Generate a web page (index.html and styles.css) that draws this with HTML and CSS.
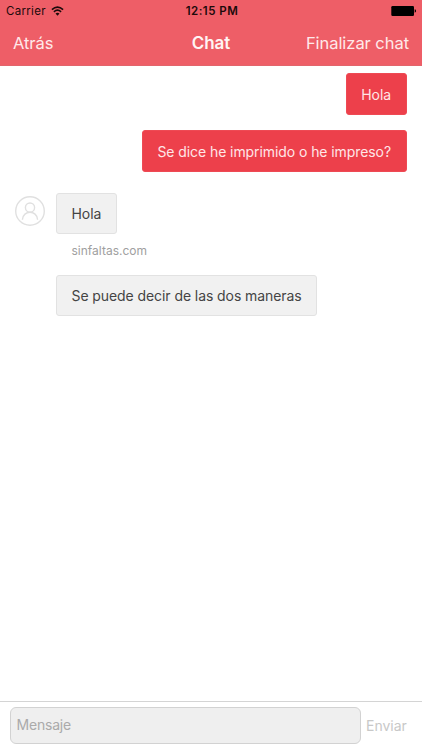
FILE: index.html
```html
<!DOCTYPE html>
<html lang="es">

<head>
    <meta charset="UTF-8" />
    <meta name="viewport" content="width=device-width, initial-scale=1.0" />
    <title>Chat</title>
    <link rel="stylesheet" href="styles.css">
</head>

<body>
    <header>
        <div class="status-bar">
            <div class="carrier">
                <span>Carrier</span>
                <svg class="wifi" viewBox="0 0 13 10">
                    <path d="M0.9 3.6 Q6.5 -1.5 12.1 3.6" />
                    <path d="M2.9 5.8 Q6.5 2.5 10.1 5.8" />
                    <path class="dot" d="M4.5 7.6 Q6.5 5.9 8.5 7.6 L6.5 9.7 Z" />
                </svg>
            </div>
            <span class="clock">12:15 PM</span>
            <svg class="battery" viewBox="0 0 26 10">
                <rect x="0.3" y="0" width="22.7" height="10" rx="1.2" />
                <path d="M23.7 3.3 Q25.1 3.6 25.1 5 Q25.1 6.4 23.7 6.7 Z" />
            </svg>
        </div>
        <nav class="nav-bar">
            <a class="back">Atrás</a>
            <span class="title">Chat</span>
            <a class="finish">Finalizar chat</a>
        </nav>
    </header>

    <main class="messages">
        <div class="bubble sent">Hola</div>
        <div class="bubble sent">Se dice he imprimido o he impreso?</div>

        <div class="received-row">
            <svg class="avatar" viewBox="0 0 30 30">
                <circle cx="15" cy="15" r="14.3" />
                <circle cx="15" cy="11.6" r="4.6" />
                <path d="M7.4 23.7 C8 13.8 22 13.8 22.6 23.7" />
            </svg>
            <div class="received-group">
                <div class="bubble received">Hola</div>
                <div class="sender">sinfaltas.com</div>
                <div class="bubble received">Se puede decir de las dos maneras</div>
            </div>
        </div>
    </main>

    <footer class="composer">
        <input type="text" class="message-input" placeholder="Mensaje">
        <button class="send">Enviar</button>
    </footer>
</body>

</html>
```
FILE: styles.css
```css
* {
    box-sizing: border-box;
}

body {
    margin: 0;
    height: 100vh;
    display: flex;
    flex-direction: column;
    background-color: #fff;
    font-family: Inter, "Liberation Sans", sans-serif;
    overflow: hidden;
}

header {
    height: 66px;
    flex: none;
    background-color: #ee5e67;
    border-bottom: 1px solid #e2656c;
}

/* Status bar */
.status-bar {
    display: grid;
    grid-template-columns: 1fr auto 1fr;
    align-items: center;
    height: 22px;
    padding: 0 5px 0 6px;
    font-size: 11.5px;
    color: #1c0a0b;
}

.carrier {
    display: flex;
    align-items: center;
    gap: 5px;
    letter-spacing: 0.3px;
}

.wifi {
    width: 13px;
    height: 10px;
    fill: none;
    stroke: #1c0a0b;
    stroke-width: 1.6;
}

.wifi .dot {
    fill: #1c0a0b;
    stroke: none;
}

.clock {
    padding-left: 1px;
    font-weight: 600;
    letter-spacing: 0.5px;
}

.battery {
    width: 26px;
    height: 10px;
    justify-self: end;
    fill: #000;
}

/* Navigation */
.nav-bar {
    display: grid;
    grid-template-columns: 1fr auto 1fr;
    align-items: center;
    height: 42px;
    padding: 0 13px;
    font-size: 16.5px;
    letter-spacing: -0.05px;
    color: #ffe9ea;
}

.title {
    font-size: 17px;
    font-weight: 600;
    letter-spacing: 0;
    color: #fff4f4;
}

.finish {
    justify-self: end;
}

/* Messages */
.messages {
    flex: 1;
    display: flex;
    flex-direction: column;
    padding: 7px 15.5px 0 15px;
}

.bubble {
    height: 41px;
    padding: 0 14.5px;
    border: 1px solid transparent;
    border-radius: 3px;
    font-size: 14px;
    line-height: 39px;
    letter-spacing: -0.08px;
    white-space: nowrap;
}

.sent {
    align-self: flex-end;
    height: 42px;
    margin-bottom: 15px;
    background-color: #ed404b;
    border-color: #ee4a54;
    color: #ffe6e7;
    line-height: 41px;
}

.received-row {
    display: flex;
    align-items: flex-start;
    gap: 11px;
    margin-top: 6px;
}

.avatar {
    width: 30px;
    height: 30px;
    margin-top: 3px;
    fill: none;
    stroke: #e0e0e0;
    stroke-width: 1.4;
}

.received-group {
    display: flex;
    flex-direction: column;
    align-items: flex-start;
}

.received {
    background-color: #f1f1f1;
    border-color: #e2e2e2;
    color: #444;
}

.sender {
    height: 41px;
    padding-left: 15.5px;
    font-size: 12px;
    line-height: 33px;
    color: #a0a0a0;
}

/* Composer */
.composer {
    display: flex;
    flex: none;
    height: 49px;
    padding: 5px 15px 7px 10px;
    border-top: 1px solid #d4d4d4;
}

.message-input {
    width: 351px;
    height: 37px;
    padding: 0 5.5px 2px;
    border: 1px solid #d2d2d2;
    border-radius: 6px;
    background-color: #efefef;
    font-family: inherit;
    font-size: 14px;
    letter-spacing: -0.2px;
}

.message-input::placeholder {
    color: #aaa;
}

.send {
    padding: 0 0 0 5px;
    border: none;
    background: none;
    font-family: inherit;
    font-size: 14px;
    color: #c8c8c8;
}
```
